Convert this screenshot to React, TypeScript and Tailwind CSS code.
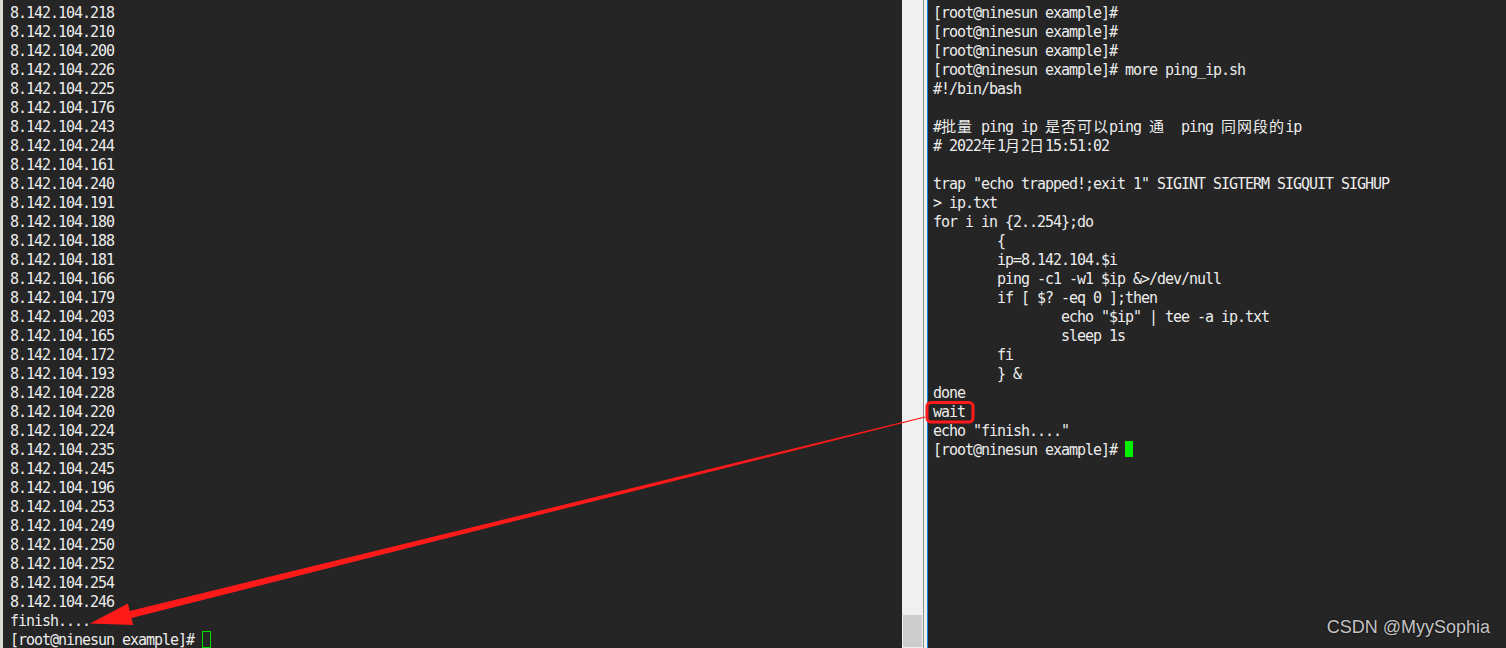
const ips = [
  "218", "210", "200", "226", "225", "176", "243", "244", "161", "240", "191",
  "180", "188", "181", "166", "179", "203", "165", "172", "193", "228", "220",
  "224", "235", "245", "196", "253", "249", "250", "252", "254", "246",
];

const prompt = "[root@ninesun example]# ";

const script = [
  prompt,
  prompt,
  prompt,
  prompt + "more ping_ip.sh",
  "#!/bin/bash",
  "",
  "#批量 ping ip 是否可以ping 通  ping 同网段的ip",
  "# 2022年1月2日15:51:02",
  "",
  'trap "echo trapped!;exit 1" SIGINT SIGTERM SIGQUIT SIGHUP',
  "> ip.txt",
  "for i in {2..254};do",
  "        {",
  "        ip=8.142.104.$i",
  "        ping -c1 -w1 $ip &>/dev/null",
  "        if [ $? -eq 0 ];then",
  '                echo "$ip" | tee -a ip.txt',
  "                sleep 1s",
  "        fi",
  "        } &",
  "done",
  "wait",
  'echo "finish...."',
];

// CJK glyphs take two cells, so give them a little extra room
function Line({ text }: { text: string }) {
  const parts = text.split(/([\u4e00-\u9fff]+)/);
  return (
    <div className="h-[19px] leading-[19px] whitespace-pre">
      {parts.map((p, i) =>
        /[\u4e00-\u9fff]/.test(p) ? (
          <span key={i} className="tracking-[1px]">
            {p}
          </span>
        ) : (
          <span key={i}>{p}</span>
        )
      )}
    </div>
  );
}

function PromptLine({ solid }: { solid?: boolean }) {
  return (
    <div className="h-[19px] leading-[19px] whitespace-pre flex items-start">
      <span>{prompt}</span>
      {solid ? (
        <span className="inline-block w-[8px] h-[16px] bg-[#00f000]" />
      ) : (
        <span className="inline-block w-[9px] h-[17px] border-[1.5px] border-[#00e000]" />
      )}
    </div>
  );
}

export default function App() {
  return (
    <div className="relative w-[1506px] h-[648px] overflow-hidden bg-[#252525] text-[#ececec] font-['DejaVu_Sans_Mono','Liberation_Mono','Noto_Sans_CJK_SC',monospace] text-[15px] tracking-[-1.03px]">
      <div className="flex h-full">
        {/* left terminal */}
        <div className="w-[902px] h-full border-l-[3px] border-[#dcdccf] pl-[7px] pt-[4px]">
          {ips.map((ip) => (
            <Line key={ip} text={`8.142.104.${ip}`} />
          ))}
          <Line text="finish...." />
          <PromptLine />
        </div>

        {/* scrollbar */}
        <div className="w-[21px] h-full bg-[#f0f0f0] flex flex-col justify-end items-center pb-[1px]">
          <div className="w-[19px] h-[32px] bg-[#cdcdcd]" />
        </div>
        <div className="w-[1px] h-full bg-[#8c8c8c]" />
        <div className="w-[3px] h-full bg-[#f0f0f0]" />
        <div className="w-[1px] h-full bg-[#1a7fd8]" />

        {/* right terminal */}
        <div className="flex-1 h-full pl-[5px] pt-[4px]">
          {script.map((l, i) => (
            <Line key={i} text={l} />
          ))}
          <PromptLine solid />
        </div>
      </div>

      {/* annotation */}
      <svg
        className="absolute inset-0 pointer-events-none"
        width="1506"
        height="648"
        viewBox="0 0 1506 648"
      >
        <rect x="927" y="402.5" width="46" height="19.5" rx="4" fill="none" stroke="#ff1a1a" strokeWidth="3" />
        <polygon points="925.1,417.6 131.5,617.9 129.8,610.9 924.9,416.4" fill="#ff1a1a" />
        <polygon points="90,623.5 127.9,603.5 133.2,624.9" fill="#ff1a1a" />
      </svg>

      <div className="absolute right-[16px] top-[618px] leading-[18px] text-[18px] tracking-normal font-['Liberation_Sans',Arial,sans-serif] text-[#c4c4c4] [text-shadow:0_0_2px_#000]">
        CSDN @MyySophia
      </div>
    </div>
  );
}
